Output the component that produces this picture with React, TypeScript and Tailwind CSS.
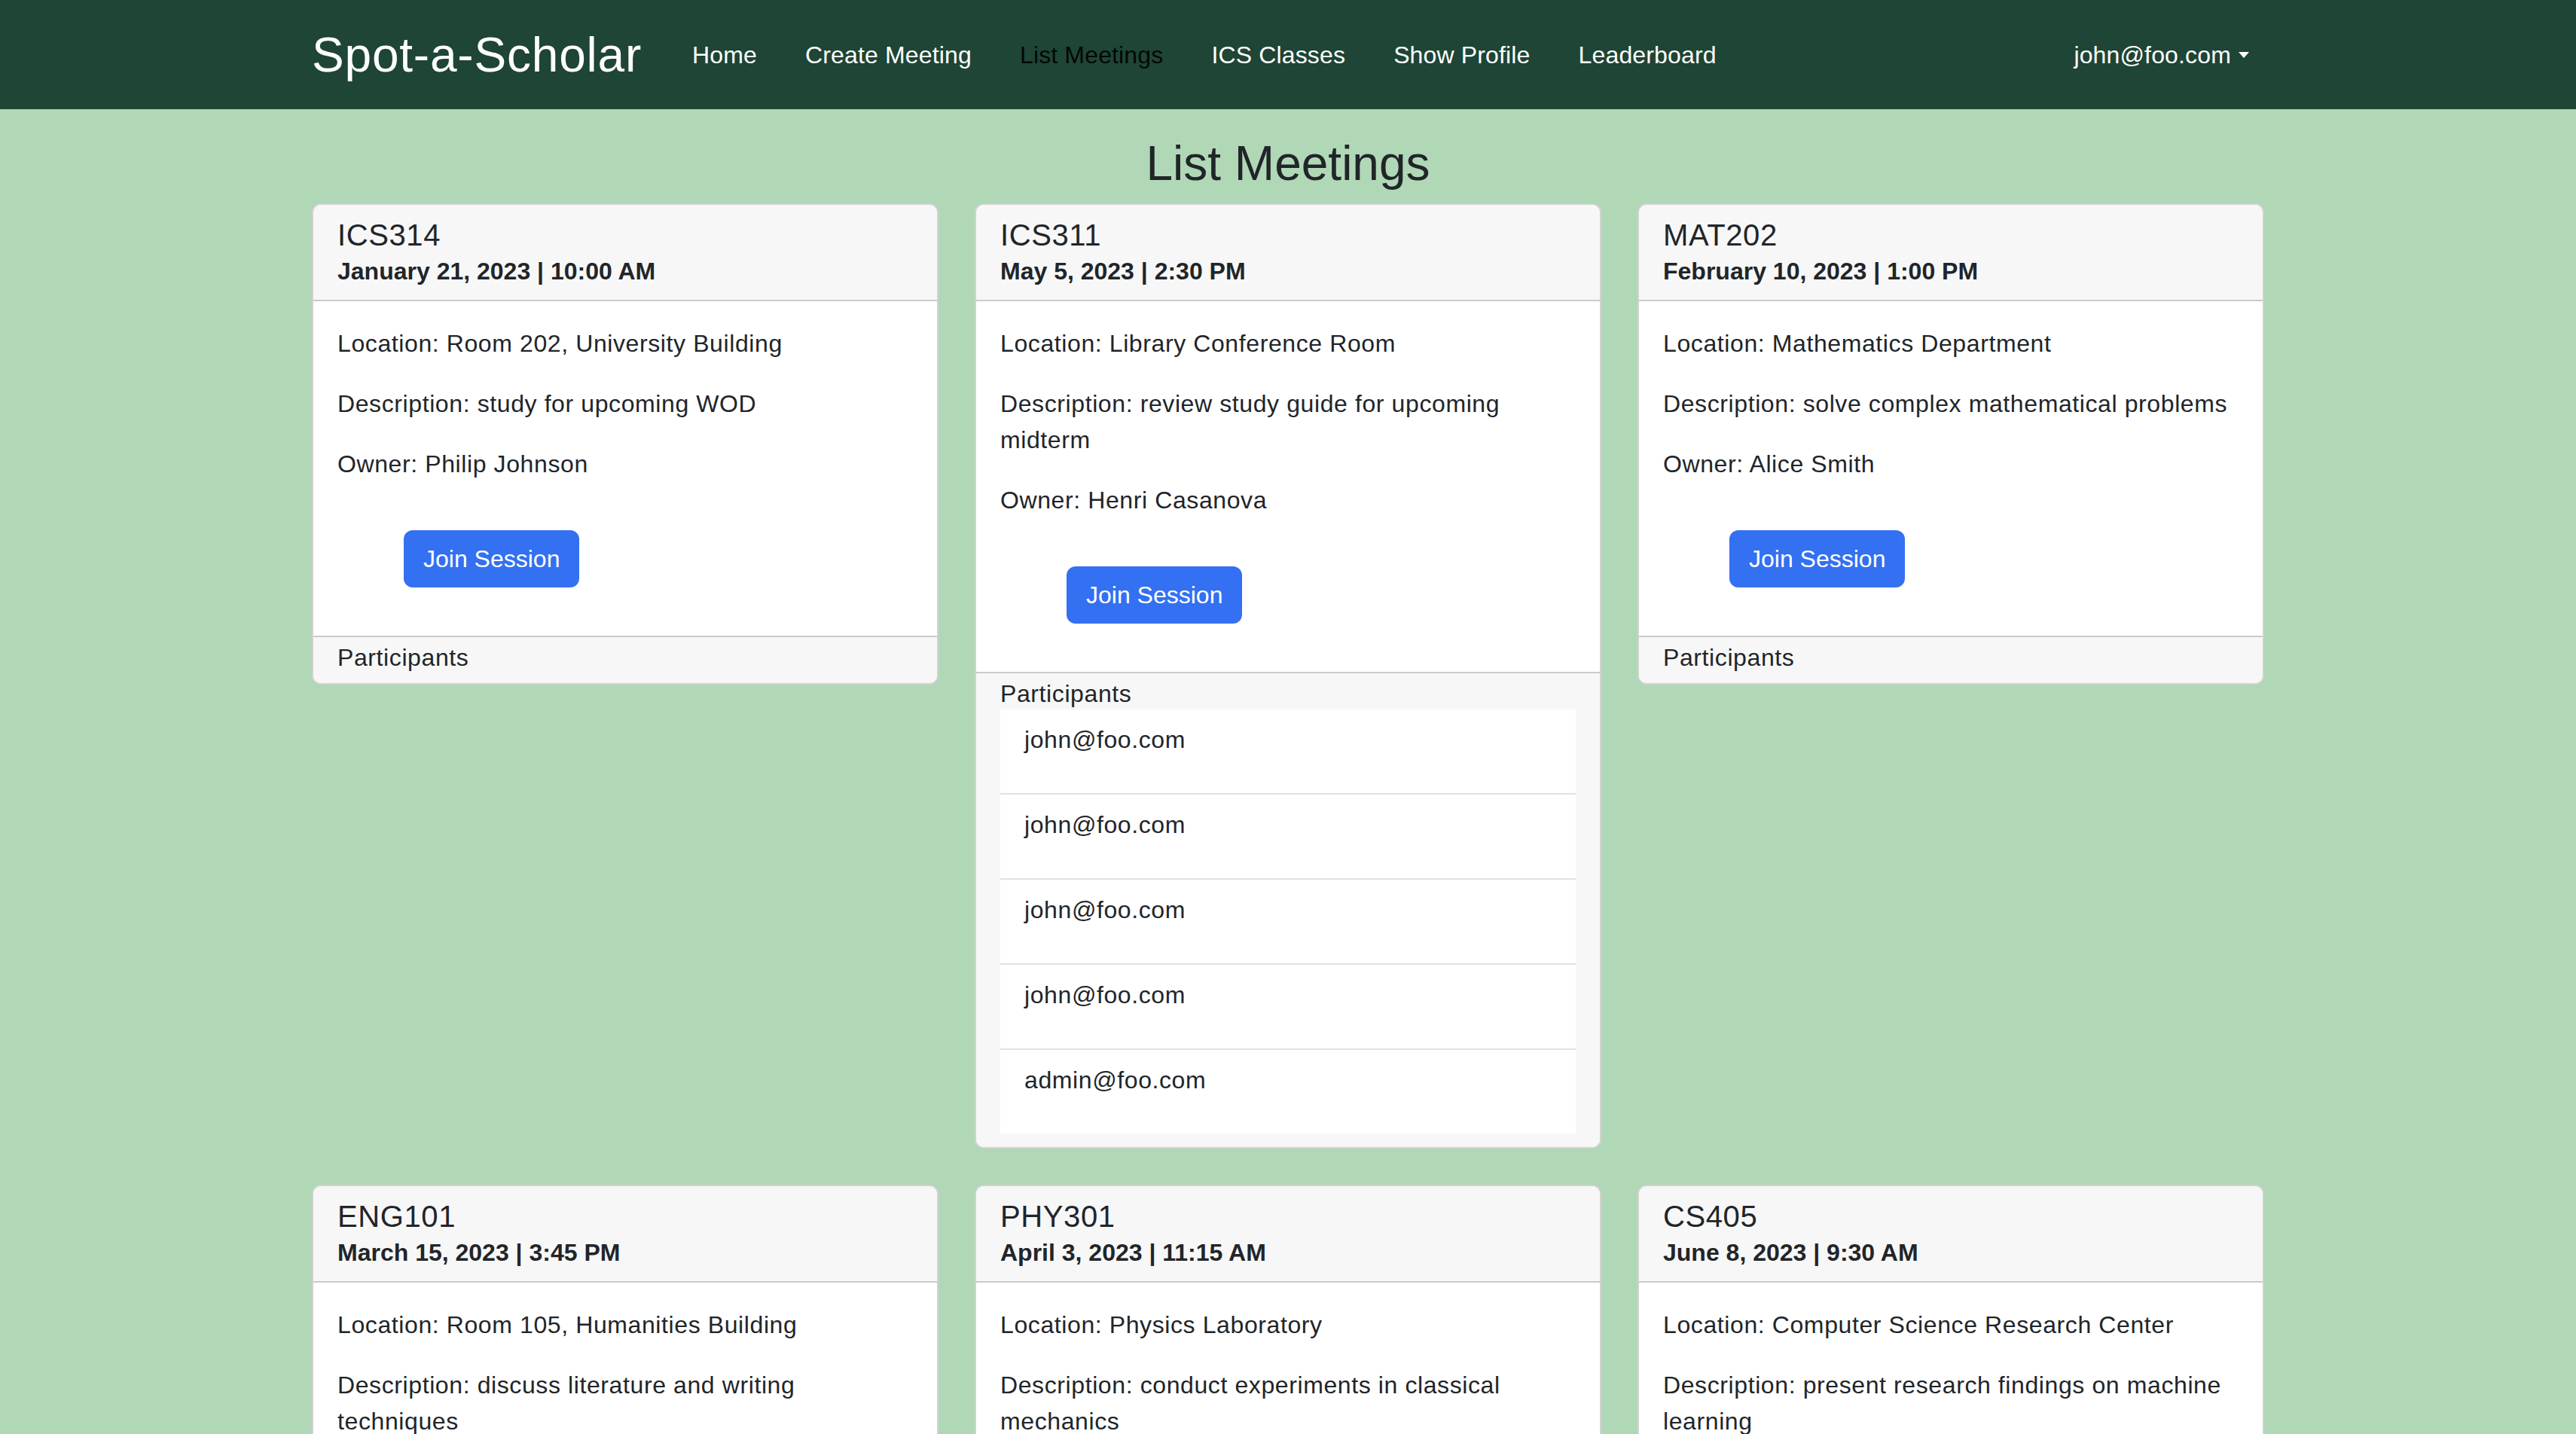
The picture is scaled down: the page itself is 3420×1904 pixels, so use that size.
import React from "react";

type Meeting = {
  course: string;
  when: string;
  location: string;
  description: string;
  owner: string;
  participants: string[];
};

const meetings: Meeting[] = [
  {
    course: "ICS314",
    when: "January 21, 2023 | 10:00 AM",
    location: "Room 202, University Building",
    description: "study for upcoming WOD",
    owner: "Philip Johnson",
    participants: [],
  },
  {
    course: "ICS311",
    when: "May 5, 2023 | 2:30 PM",
    location: "Library Conference Room",
    description: "review study guide for upcoming midterm",
    owner: "Henri Casanova",
    participants: ["john@foo.com", "john@foo.com", "john@foo.com", "john@foo.com", "admin@foo.com"],
  },
  {
    course: "MAT202",
    when: "February 10, 2023 | 1:00 PM",
    location: "Mathematics Department",
    description: "solve complex mathematical problems",
    owner: "Alice Smith",
    participants: [],
  },
  {
    course: "ENG101",
    when: "March 15, 2023 | 3:45 PM",
    location: "Room 105, Humanities Building",
    description: "discuss literature and writing techniques",
    owner: "Emily Brown",
    participants: [],
  },
  {
    course: "PHY301",
    when: "April 3, 2023 | 11:15 AM",
    location: "Physics Laboratory",
    description: "conduct experiments in classical mechanics",
    owner: "David Lee",
    participants: [],
  },
  {
    course: "CS405",
    when: "June 8, 2023 | 9:30 AM",
    location: "Computer Science Research Center",
    description: "present research findings on machine learning",
    owner: "Sarah Chen",
    participants: [],
  },
];

const NavBar = () => {
  const links = ["Home", "Create Meeting", "List Meetings", "ICS Classes", "Show Profile", "Leaderboard"];
  return (
    <nav className="h-[145px] bg-[#1e4535] tracking-[0.15px]">
      <div className="mx-auto flex h-full w-[2592px] items-center">
        <span className="mr-[35px] text-[64px] font-medium leading-none tracking-[0.8px] text-white">Spot-a-Scholar</span>
        <div className="flex items-center">
          {links.map((l) => (
            <a
              key={l}
              className={
                l === "List Meetings"
                  ? "px-[32px] text-[32px] leading-[48px] text-black/90"
                  : "px-[32px] text-[32px] leading-[48px] text-white"
              }
            >
              {l}
            </a>
          ))}
        </div>
        {/* user dropdown */}
        <div className="ml-auto flex items-center pr-[20px] text-[32px] leading-[48px] text-white">
          john@foo.com
          <span className="ml-[10px] inline-block h-0 w-0 border-x-[7px] border-t-[8px] border-x-transparent border-t-white" />
        </div>
      </div>
    </nav>
  );
};

const MeetingCard = ({ m }: { m: Meeting }) => (
  <div className="overflow-hidden rounded-[12px] border-2 border-black/[0.175] bg-white">
    <div className="border-b-2 border-black/[0.175] bg-[#f7f7f7] px-[32px] pb-[14px] pt-[16px]">
      <h5 className="text-[40px] font-medium leading-[48px]">{m.course}</h5>
      <div className="text-[32px] font-semibold leading-[48px] tracking-normal">{m.when}</div>
    </div>
    <div className="px-[32px] py-[32px] text-[32px] leading-[48px]">
      <p className="mb-[32px]">Location: {m.location}</p>
      <p className="mb-[32px]">Description: {m.description}</p>
      <p className="mb-[32px]">Owner: {m.owner}</p>
      <div className="py-[32px] pl-[88px]">
        <button className="h-[76px] rounded-[12px] bg-[#3370f2] px-[26px] text-[32px] tracking-normal text-white">
          Join Session
        </button>
      </div>
    </div>
    <div className="border-t-2 border-black/[0.175] bg-[#f7f7f7] px-[32px] pb-[18px] pt-[12px]">
      <div className="text-[32px] font-medium leading-[31px]">Participants</div>
      {m.participants.length > 0 && (
        <ul className="mt-[5px] bg-white">
          {m.participants.map((p, i) => (
            <li
              key={i}
              className={
                i === 0
                  ? "px-[32px] pb-[47px] pt-[16px] text-[32px] leading-[48px]"
                  : "border-t-2 border-[#dee2e6] px-[32px] pb-[47px] pt-[16px] text-[32px] leading-[48px]"
              }
            >
              {p}
            </li>
          ))}
        </ul>
      )}
    </div>
  </div>
);

export default function App() {
  return (
    <div className="min-h-screen bg-[#b0d8b6] font-['Liberation_Sans',Arial,sans-serif] tracking-[0.6px] text-[#212529]">
      <NavBar />
      <main className="mx-auto w-[2592px] pb-[48px] pt-[34px]">
        <h2 className="mb-[14px] text-center text-[64px] font-medium leading-[77px] tracking-normal">List Meetings</h2>
        <div className="grid grid-cols-3 items-start gap-[48px]">
          {meetings.map((m) => (
            <MeetingCard key={m.course} m={m} />
          ))}
        </div>
      </main>
    </div>
  );
}
